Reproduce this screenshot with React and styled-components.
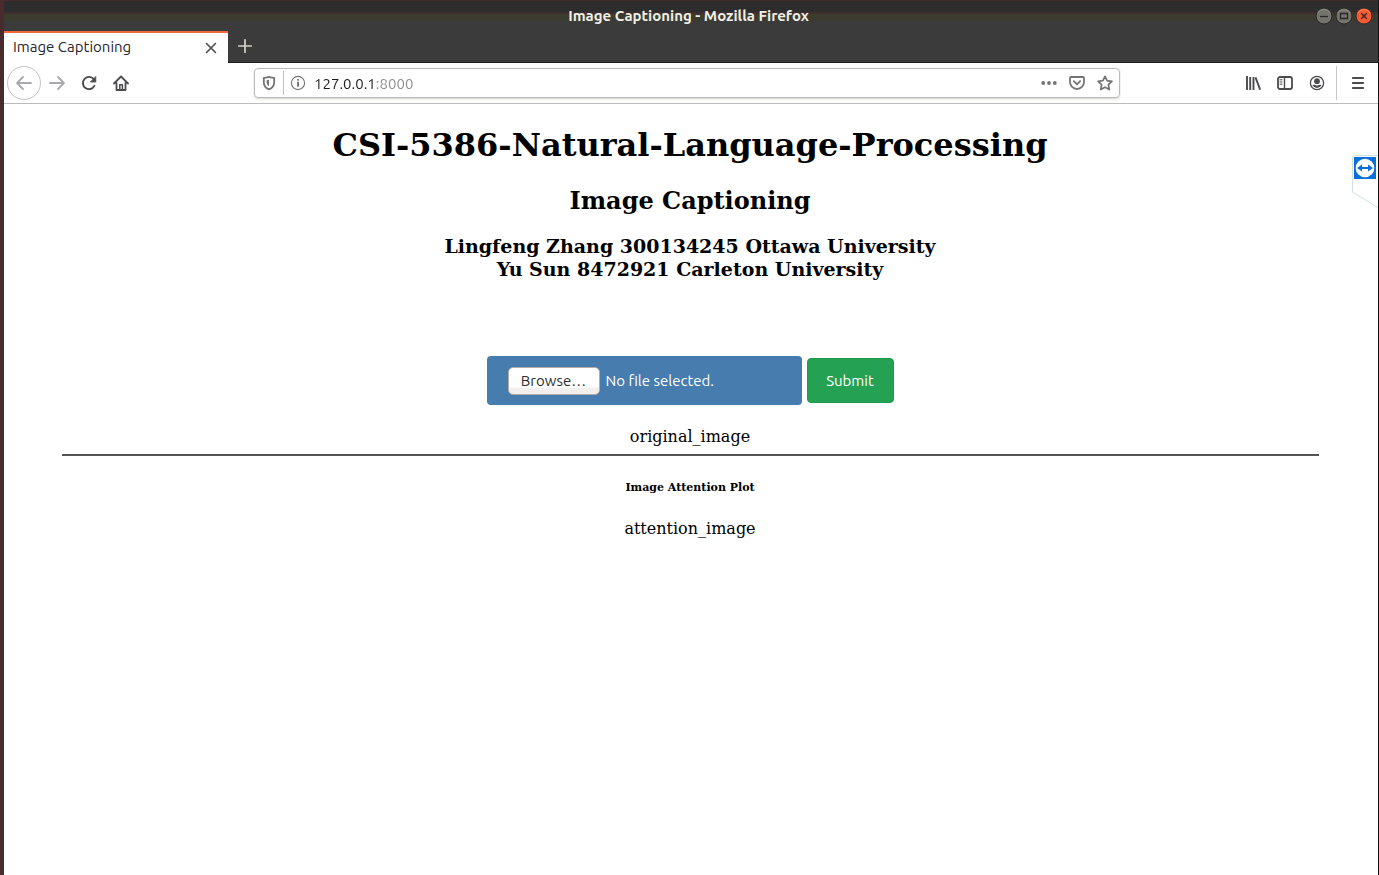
import React, { useState } from "react";
import styled, { createGlobalStyle } from "styled-components";

const uiFont = `"Ubuntu", "Noto Sans", "Open Sans", sans-serif`;

const GlobalStyle = createGlobalStyle`
  * { box-sizing: border-box; }
  body { margin: 0; background: #fff; }
`;

const Window = styled.div`
  min-height: 100vh;
  display: flex;
  flex-direction: column;
  background: #fff;
  border-left: 4px solid #472b2d;
  border-right: 1px solid #111;
  font-family: ${uiFont};
`;

const TitleBar = styled.header`
  height: 31px;
  display: grid;
  grid-template-columns: 1fr auto 1fr;
  align-items: center;
  padding-right: 5px;
  background: linear-gradient(#452b2e 0 1px, #2d2d2d 1px 12px, #402e2e 12px 14px, #3b3b2e 14px 20px, #3b3b3b 21px);
`;

const WindowTitle = styled.div`
  grid-column: 2;
  color: #efeee6;
  font-size: 15px;
  font-weight: 600;
  line-height: 20px;
`;

const WindowControls = styled.div`
  display: flex;
  justify-content: flex-end;
  gap: 2px;
`;

const PlainButton = styled.button`
  display: flex;
  align-items: center;
  justify-content: center;
  flex: none;
  padding: 0;
  border: 0;
  background: none;
  color: #4c4c4f;
`;

const WindowButton = styled(PlainButton)`
  width: 18px;
  height: 18px;
`;

const TabStrip = styled.nav`
  height: 32px;
  display: flex;
  background: #3b3b3b;
  border-bottom: 1px solid #1c1c1c;
`;

const Tab = styled.div`
  width: 224px;
  height: 32px;
  display: flex;
  align-items: center;
  justify-content: space-between;
  padding: 0 8px 0 9px;
  background: #fff;
  border-top: 2px solid #f4693c;
  color: #26262a;
  font-size: 15px;
  line-height: 20px;
`;

const TabLabel = styled.span`
  padding-bottom: 2px;
`;

const TabButton = styled(PlainButton)`
  width: ${(p) => (p.$wide ? "34px" : "18px")};
  height: ${(p) => (p.$wide ? "30px" : "18px")};
  color: ${(p) => (p.$wide ? "#d6d5c8" : "#4c4c4f")};
`;

const Toolbar = styled.div`
  height: 41px;
  display: grid;
  grid-template-columns: 250px minmax(0, 866fr) minmax(150px, 258fr);
  align-items: center;
  background: #fff;
  border-bottom: 1px solid #bcbcbc;
`;

const NavGroup = styled.div`
  display: flex;
  align-items: center;
  padding-left: 3px;
`;

const ToolButton = styled(PlainButton)`
  width: 32px;
  height: 34px;
  color: ${(p) => (p.$muted ? "#a9a9ab" : "#4c4c4f")};
`;

const BackButton = styled(ToolButton)`
  width: 34px;
  border: 1px solid #c4c4c4;
  border-radius: 50%;
`;

const AddressBar = styled.div`
  height: 30px;
  display: flex;
  align-items: center;
  border: 1px solid #bababa;
  border-radius: 4px;
  box-shadow: 0 1px 2px rgba(90, 85, 60, 0.25);
`;

const AddressButton = styled(PlainButton)`
  width: 28px;
  height: 24px;
  color: #747476;
`;

const Shield = styled(AddressButton)`
  width: 29px;
  border-right: 1px solid #bdbdbd;
`;

const AddressInput = styled.input`
  flex: 1;
  min-width: 0;
  height: 24px;
  padding: 0 0 0 2px;
  border: 0;
  outline: 0;
  font-family: ${uiFont};
  font-size: 15px;
  color: transparent;
  caret-color: #222;
  background: linear-gradient(90deg, #1c1c20 0 62px, #8b8b8d 62px) text;
`;

const ToolGroup = styled.div`
  display: flex;
  justify-content: flex-end;
  align-items: center;
`;

const MenuButton = styled(ToolButton)`
  width: 42px;
  border-left: 1px solid #c6c6c6;
  margin-left: 3px;
`;

const Page = styled.main`
  flex: 1;
  padding: 22px 10px 22px 8px;
  color: #000;
  font-family: "DejaVu Serif", serif;
  text-align: center;
`;

const Title = styled.h1`
  margin: 0 0 21px;
  font-size: 32px;
  line-height: 38px;
`;

const Subtitle = styled.h2`
  margin: 0 0 18px;
  font-size: 24px;
  line-height: 32px;
`;

const Authors = styled.h3`
  margin: 0 0 75px;
  font-size: 19px;
  line-height: 23px;
`;

const UploadForm = styled.form`
  display: flex;
  flex-wrap: wrap;
  justify-content: center;
  align-items: center;
  gap: 5px;
  margin-bottom: 21px;
  font-family: ${uiFont};
  font-size: 15px;
`;

const FilePicker = styled.label`
  position: relative;
  width: 315px;
  height: 49px;
  display: flex;
  align-items: center;
  gap: 6px;
  padding: 0 21px;
  border-radius: 4px;
  background: #467cae;
  color: #fff;
`;

const FileInput = styled.input`
  position: absolute;
  inset: 0;
  width: 100%;
  height: 100%;
  opacity: 0;
`;

const BrowseFace = styled.span`
  width: 92px;
  height: 28px;
  border: 1px solid #b3aca6;
  border-radius: 5px;
  background: linear-gradient(#fff 0 70%, #f1eeed 80%);
  color: #2e2e2e;
  line-height: 26px;
`;

const SubmitButton = styled.button`
  width: 87px;
  height: 45px;
  border: 1px solid #1c9b4b;
  border-radius: 4px;
  background: #25a153;
  color: #fff;
  font-family: ${uiFont};
  font-size: 15px;
`;

const Slot = styled.div`
  font-size: 16px;
  line-height: 22px;
`;

const Rule = styled.hr`
  height: 2px;
  margin: 6px 49px 24px 50px;
  border: 0;
  background: #555;
`;

const PlotHeading = styled.h6`
  margin: 0 0 23px;
  font-size: 11px;
  line-height: 15px;
`;

const SideFlap = styled.button`
  position: absolute;
  top: 155px;
  right: 1px;
  width: 26px;
  height: 54px;
  padding: 0;
  border: 0;
  background: none;
`;

function Icon({ size = 16, width = 2, children }) {
  return (
    <svg width={size} height={size} viewBox={`0 0 ${size} ${size}`} fill="none" stroke="currentColor"
      strokeWidth={width} strokeLinecap="round" strokeLinejoin="round" aria-hidden="true">
      {children}
    </svg>
  );
}

function ControlIcon({ close, children }) {
  return (
    <svg width="18" height="18" viewBox="0 0 18 18" fill="none" aria-hidden="true">
      <circle cx="9" cy="9" r="8" fill={close ? "#f55a32" : "#74736c"} stroke={close ? "#302d2b" : "#292927"} />
      <path d="M3 6a7 7 0 0 1 12 0" stroke={close ? "#ff8060" : "#8b8a83"} />
      <g stroke="#292725" strokeWidth="1.3">{children}</g>
    </svg>
  );
}

export default function App() {
  const [address, setAddress] = useState("127.0.0.1:8000");
  const [fileName, setFileName] = useState("No file selected.");

  return (
    <>
      <GlobalStyle />
      <Window>
        <TitleBar>
          <WindowTitle>Image Captioning - Mozilla Firefox</WindowTitle>
          <WindowControls>
            <WindowButton aria-label="Minimize"><ControlIcon><path d="M5 9.5h8" /></ControlIcon></WindowButton>
            <WindowButton aria-label="Maximize"><ControlIcon><path d="M5.5 6.5h7v5h-7z" /></ControlIcon></WindowButton>
            <WindowButton aria-label="Close window"><ControlIcon close><path d="m6.3 6.3 5.4 5.4m0-5.4-5.4 5.4" /></ControlIcon></WindowButton>
          </WindowControls>
        </TitleBar>

        <TabStrip>
          <Tab>
            <TabLabel>Image Captioning</TabLabel>
            <TabButton aria-label="Close tab"><Icon size={16} width={1.6}><path d="m3.5 3.5 9 9m0-9-9 9" /></Icon></TabButton>
          </Tab>
          <TabButton $wide aria-label="New tab"><Icon width={1.7}><path d="M8 1.8v12.4M1.8 8h12.4" /></Icon></TabButton>
        </TabStrip>

        <Toolbar>
          <NavGroup>
            <BackButton $muted aria-label="Back"><Icon size={18} width={1.8}><path d="M16 9H2m6-6L2 9l6 6" /></Icon></BackButton>
            <ToolButton $muted aria-label="Forward"><Icon size={18} width={1.8}><path d="M2 9h14m-6-6 6 6-6 6" /></Icon></ToolButton>
            <ToolButton aria-label="Reload">
              <Icon width={1.9}>
                <path d="M13.4 10.9A6.1 6.1 0 1 1 12.8 4.2" />
                <path d="M14.8 1.8V7H9.6z" fill="currentColor" strokeWidth="0.8" />
              </Icon>
            </ToolButton>
            <ToolButton aria-label="Home">
              <Icon width={1.8}>
                <path d="M1 8.5 8 1.5l7 7M3.5 8v7h9V8" />
                <path d="M6.8 14.5v-4.7h2.6v4.7" strokeWidth="1.5" />
              </Icon>
            </ToolButton>
          </NavGroup>

          <AddressBar>
            <Shield aria-label="Tracking protection">
              <Icon size={16} width={1.8}>
                <path d="M8 1.8c1.9.7 3.5 1 5.2 1v4.4c0 3.5-2 5.9-5.2 7.2-3.2-1.3-5.2-3.7-5.2-7.2V2.8c1.7 0 3.3-.3 5.2-1z" />
                <path d="M8 4.8v6.5C6.4 10.2 5.6 9 5.6 7.2V5.3z" fill="currentColor" stroke="none" />
              </Icon>
            </Shield>
            <AddressButton aria-label="Site information">
              <Icon width={1.1}>
                <circle cx="8" cy="8" r="6.6" />
                <path d="M8 7.4v3.5M8 4.8v.1" strokeWidth="1.9" />
              </Icon>
            </AddressButton>
            <AddressInput aria-label="Address" value={address} onChange={(e) => setAddress(e.target.value)} />
            <AddressButton aria-label="Page actions">
              <Icon><g fill="currentColor" stroke="none"><circle cx="2.2" cy="8" r="1.9" /><circle cx="8" cy="8" r="1.9" /><circle cx="13.8" cy="8" r="1.9" /></g></Icon>
            </AddressButton>
            <AddressButton aria-label="Save to Pocket">
              <Icon width={1.8}><path d="M2 2h12a1 1 0 0 1 1 1v4A7 7 0 0 1 1 7V3a1 1 0 0 1 1-1zM4.8 6.2 8 9.3l3.2-3.1" /></Icon>
            </AddressButton>
            <AddressButton aria-label="Bookmark">
              <Icon width={1.7}><path d="m8 1.3 2.1 4.4 4.8.7-3.5 3.3.9 4.9L8 12.2l-4.3 2.4.9-4.9L1.1 6.4l4.8-.7z" /></Icon>
            </AddressButton>
          </AddressBar>

          <ToolGroup>
            <ToolButton aria-label="Library">
              <svg width="16" height="16" viewBox="0 0 16 16" stroke="currentColor" strokeWidth="1.9" aria-hidden="true"><path d="M2 1v14M5.2 2v13M8.5 2v13M10.5 2.3 15.2 14.7" /></svg>
            </ToolButton>
            <ToolButton aria-label="Sidebar">
              <Icon width={1.8}><rect x="1" y="2" width="14" height="12" rx="2" /><path d="M7.5 2v12" strokeWidth="1.4" /><path d="M3 4.8h2M3 7h2M3 9.2h2" strokeWidth="1" /></Icon>
            </ToolButton>
            <ToolButton aria-label="Account">
              <Icon width={1.3}><circle cx="8" cy="8" r="6.6" /><circle cx="8" cy="6.2" r="2.9" fill="currentColor" stroke="none" /><path d="M3.5 10.3c1.4-.9 2.5-.3 4.5.5 2-.8 3.1-1.4 4.5-.5a5.1 5.1 0 0 1-9 0z" fill="currentColor" stroke="none" /></Icon>
            </ToolButton>
            <MenuButton aria-label="Open menu">
              <Icon width={1.8}><path d="M2.8 3h10.4M2.8 8h10.4M2.8 13h10.4" /></Icon>
            </MenuButton>
          </ToolGroup>
        </Toolbar>

        <Page>
          <Title>CSI-5386-Natural-Language-Processing</Title>
          <Subtitle>Image Captioning</Subtitle>
          <Authors>
            Lingfeng Zhang 300134245 Ottawa University
            <br />
            Yu Sun 8472921 Carleton University
          </Authors>
          <UploadForm onSubmit={(e) => e.preventDefault()}>
            <FilePicker>
              <FileInput type="file" aria-label="Image file" onChange={(e) => setFileName(e.target.files[0]?.name ?? "No file selected.")} />
              <BrowseFace>Browse…</BrowseFace>
              <span>{fileName}</span>
            </FilePicker>
            <SubmitButton type="submit">Submit</SubmitButton>
          </UploadForm>
          <Slot>original_image</Slot>
          <Rule />
          <PlotHeading>Image Attention Plot</PlotHeading>
          <Slot>attention_image</Slot>
        </Page>

        <SideFlap aria-label="TeamViewer">
          <svg width="26" height="54" viewBox="0 0 26 54" aria-hidden="true">
            <path d="M26 .5H3Q.5.5.5 3v34L26 52.5" fill="#fff" stroke="#cfdfe3" />
            <path d="M2 2h22v22H2z" fill="#0b70d8" />
            <circle cx="13" cy="13" r="9.3" fill="#fff" />
            <path d="m5 13 5-3.6v2.5h6V9.4l5 3.6-5 3.6v-2.5h-6v2.5z" fill="#0b70d8" />
          </svg>
        </SideFlap>
      </Window>
    </>
  );
}
